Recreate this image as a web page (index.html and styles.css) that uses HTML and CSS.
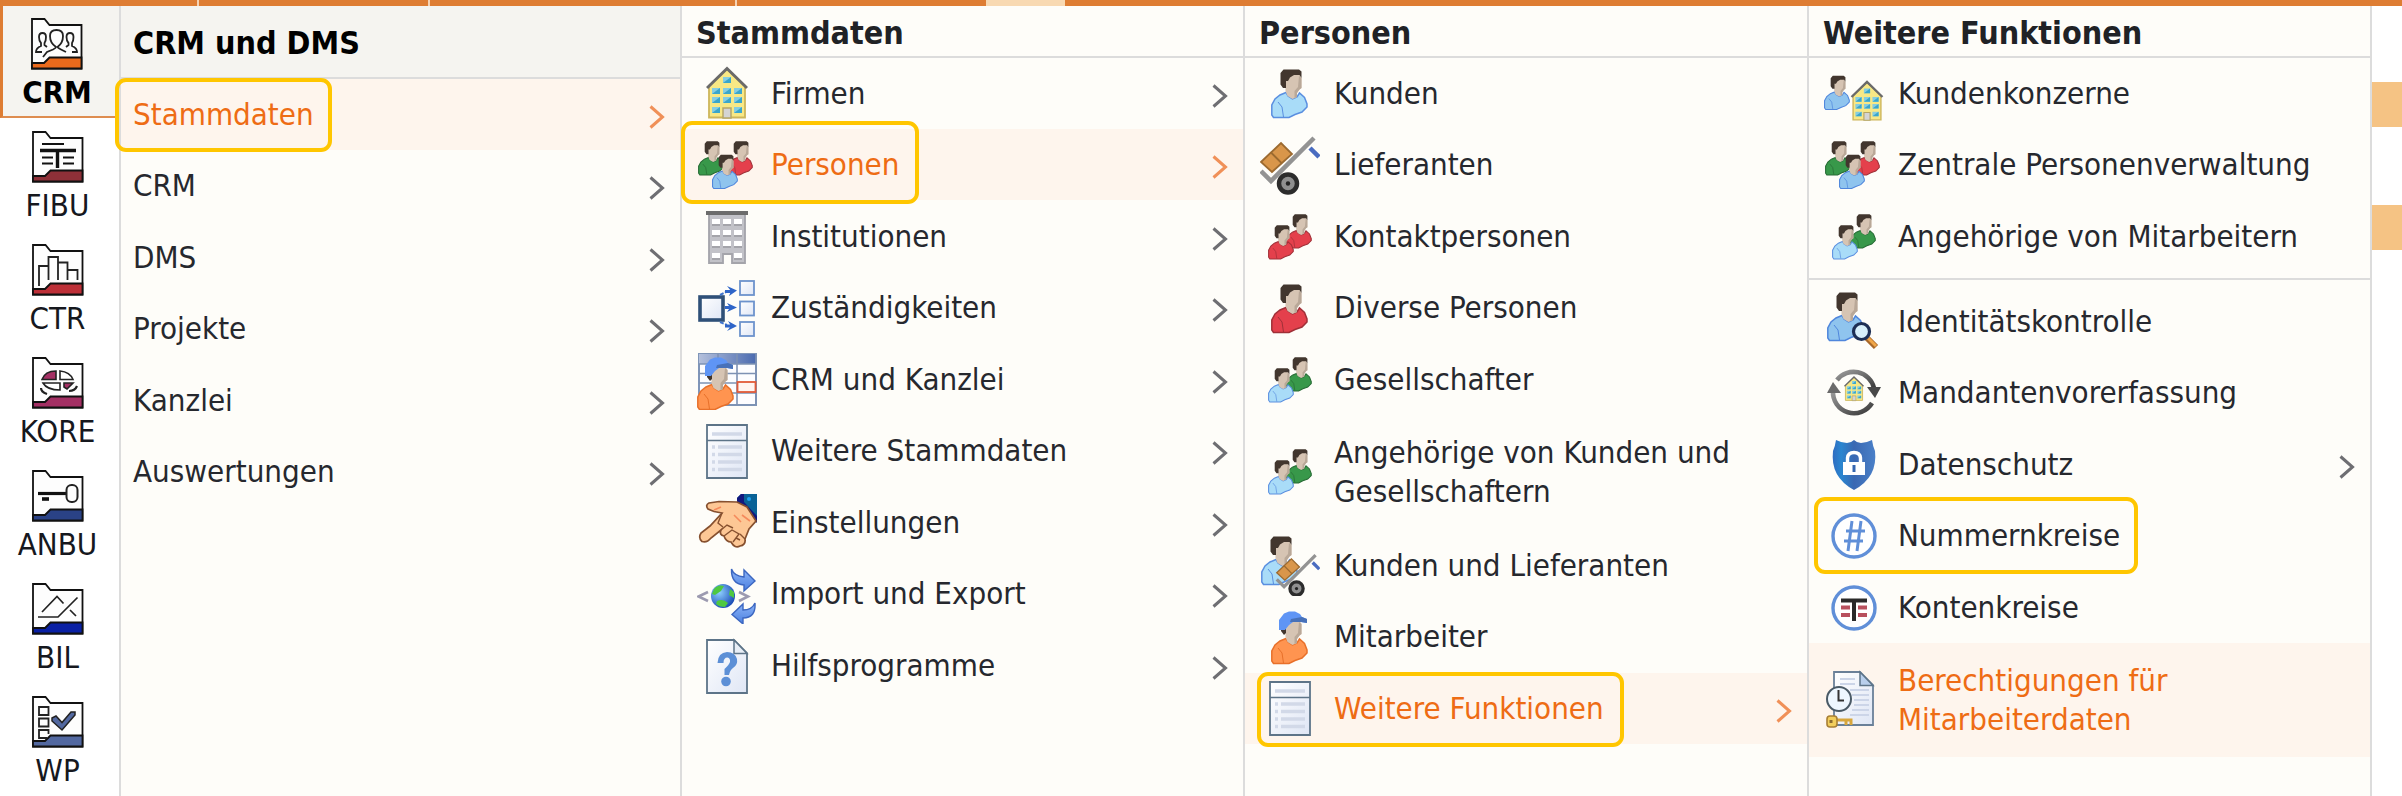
FILE: index.html
```
<!DOCTYPE html>
<html lang="de">
<head>
    <meta charset="UTF-8">
    <meta name="viewport" content="width=device-width, initial-scale=1.0">
    <title>CRM und DMS</title>
    <link rel="stylesheet" href="styles.css">
</head>
<body>
    <!-- Icon-Vorrat -->
    <svg class="sprite" aria-hidden="true">
        <defs>
            <linearGradient id="gPaper" x1="0" y1="0" x2="1" y2="1">
                <stop offset="0" stop-color="#ffffff"/>
                <stop offset="1" stop-color="#dfe6f5"/>
            </linearGradient>
            <linearGradient id="gArrow" x1="0" y1="0" x2="0" y2="1">
                <stop offset="0" stop-color="#8db5f7"/>
                <stop offset="1" stop-color="#4a7fe0"/>
            </linearGradient>
            <radialGradient id="gGlobe" cx=".35" cy=".35" r=".7">
                <stop offset="0" stop-color="#8fd0ff"/>
                <stop offset="1" stop-color="#1a4bb5"/>
            </radialGradient>
            <linearGradient id="gShield" x1="0" y1="0" x2="1" y2="0">
                <stop offset="0" stop-color="#2f6cc0"/>
                <stop offset=".2" stop-color="#2a86d0"/>
                <stop offset=".5" stop-color="#3a68b2"/>
                <stop offset="1" stop-color="#4a80c8"/>
            </linearGradient>
            <linearGradient id="gRing" x1="0" y1="0" x2="1" y2="1">
                <stop offset="0" stop-color="#9a9a9a"/>
                <stop offset="1" stop-color="#3a3a3a"/>
            </linearGradient>
            <linearGradient id="gHead" x1="0" y1="0" x2="1" y2="0">
                <stop offset="0" stop-color="#b4c0dc"/>
                <stop offset="1" stop-color="#4b6bb0"/>
            </linearGradient>
        </defs>

        <symbol id="chevron" viewBox="0 0 16 24">
            <path d="M1.5 1.5 L13.5 12 L1.5 22.5" fill="none" stroke="currentColor" stroke-width="3"/>
        </symbol>

        <!-- Ordner für die Modulleiste -->
        <symbol id="folder" viewBox="0 0 52 52">
            <path d="M1 1 H13.500 L18.500 7 H50.500 V50.500 H1 Z" fill="#fdfdfd" stroke="#111" stroke-width="1.8"/>
            <path d="M1 45 H13 L18.500 39.500 H50.500 V50.500 H1 Z" fill="currentColor" stroke="#111" stroke-width="1.8"/>
        </symbol>

        <!-- Personen -->
        <symbol id="shirt" viewBox="0 0 37 50" overflow="visible">
            <path d="M15 23.500 L17 27 L21.500 30 L26 28 L28.500 24 L33.500 28.500 L36 35 V38 L31 43 L24 45.500 L18 48.500 H2.500 L.8 46 V36 L4 30 L9 26 Z" fill="var(--shirt)" stroke="var(--edge)" stroke-width="1.5"/>
            <path d="M7 33 L11 38 L12.500 48" fill="none" stroke="var(--edge)" stroke-width="1"/>
        </symbol>
        <symbol id="face" viewBox="0 0 37 50" overflow="visible">
            <path d="M19 8 L23 5 H28.500 L30.500 9 V19 L28.500 20.500 L26 24 V28 L21.500 30 L16.500 27 L14.500 22 V12 Z" fill="#d6c4b3"/>
            <path d="M28 7 L30.500 9 V19 L28.500 20.500 L26 24 V28 L23.500 29 V22 L27 18 Z" fill="#b9a898"/>
        </symbol>
        <symbol id="person" viewBox="0 0 37 50" overflow="visible">
            <use href="#shirt" width="37" height="50"/>
            <use href="#face" width="37" height="50"/>
            <path d="M9.500 4 L12.500 .5 H28 L30.500 2.500 V9 L28.500 6 H23 L19 8.500 L17 12 H15 V19 H12 L9.500 15.500 Z" fill="#42362e"/>
        </symbol>
        <symbol id="worker" viewBox="0 0 37 54" overflow="visible">
            <use href="#shirt" y="4" width="37" height="50"/>
            <use href="#face" y="4" width="37" height="50"/>
            <path d="M10 17 H15 V22 L13 24 L10 20 Z" fill="#42362e"/>
            <path d="M8 19 V9 L13 2.500 L18 .5 H24 L29 3 L31 6 L36 8 V12 L30 11 H22 L18 14 L14 19 Z" fill="#5f95f5"/>
            <path d="M20 8 L31 6 L36 8 V12 L30 11 H19 Z" fill="#4871b8"/>
        </symbol>
        <symbol id="pair" viewBox="0 0 60 60">
            <use href="#person" class="back" x="26" y="7" width="26" height="35"/>
            <use href="#person" x="8" y="18" width="26" height="35"/>
        </symbol>
        <symbol id="trio" viewBox="0 0 60 60">
            <use href="#person" class="green" x="1" y="6" width="26" height="35"/>
            <use href="#person" class="red" x="30" y="6" width="26" height="35"/>
            <use href="#person" class="denim" x="15" y="19" width="26" height="36"/>
        </symbol>

        <!-- Gebäude -->
        <symbol id="house" viewBox="0 0 42 53">
            <path d="M3 20 L21 3 L39 20 V51.500 H3 Z" fill="#f8e885" stroke="#cdb65b" stroke-width="1.8"/>
            <path d="M1 22 L21 2.500 L41 22" fill="none" stroke="#6a6a6a" stroke-width="3"/>
            <path d="M17 11 h8 v6 h-8z M6 22 h8 v6 h-8z M17 22 h8 v6 h-8z M28 22 h8 v6 h-8z M6 31 h8 v6 h-8z M17 31 h8 v6 h-8z M28 31 h8 v6 h-8z M6 41 h8 v6 h-8z M28 41 h8 v6 h-8z" fill="#86cde0"/>
            <path d="M17 17 l8 -6 v6z M6 28 l8 -6 v6z M17 28 l8 -6 v6z M28 28 l8 -6 v6z M6 37 l8 -6 v6z M17 37 l8 -6 v6z M28 37 l8 -6 v6z M6 47 l8 -6 v6z M28 47 l8 -6 v6z" fill="#3aa6cc"/>
            <path d="M17 42 h8 v10 h-8z" fill="#d4d4d4" stroke="#b5a668" stroke-width="1.5"/>
        </symbol>
        <symbol id="office" viewBox="0 0 42 53">
            <path d="M3 3 H39 V52 H26 V43 H17 V52 H3 Z" fill="#c2c2c8" stroke="#a4a4aa" stroke-width="1.8"/>
            <path d="M0 0 H42 V4 H0 Z" fill="#6c6c6c"/>
            <path d="M6 8 h8 v5 h-8z M17 8 h8 v5 h-8z M28 8 h8 v5 h-8z M6 19 h8 v5 h-8z M17 19 h8 v5 h-8z M28 19 h8 v5 h-8z M6 30 h8 v5 h-8z M17 30 h8 v5 h-8z M28 30 h8 v5 h-8z M6 42 h8 v5 h-8z M28 42 h8 v5 h-8z" fill="#fff"/>
            <path d="M6 14 h8 M17 14 h8 M28 14 h8 M6 25 h8 M17 25 h8 M28 25 h8 M6 36 h8 M17 36 h8 M28 36 h8 M6 48 h8 M28 48 h8" stroke="#9a9aa0" stroke-width="1.5"/>
        </symbol>

        <symbol id="list" viewBox="0 0 42 55">
            <path d="M1 1 H41 V54 H1 Z" fill="url(#gPaper)" stroke="#5d7488" stroke-width="1.8"/>
            <path d="M1 16.500 H41" stroke="#5d7488" stroke-width="1.5"/>
            <path d="M6 10 H36 M12 23 H36 M12 30.500 H36 M12 38 H36 M12 45.500 H36 M6 23 h3 M6 30.500 h3 M6 38 h3 M6 45.500 h3" stroke="#d2d9e8" stroke-width="3.5"/>
        </symbol>

        <symbol id="trolley" viewBox="0 0 60 60" overflow="visible">
            <path d="M1 36 L11 46 L54 3" fill="none" stroke="#939393" stroke-width="4.500"/>
            <path d="M50 13 L59 22" stroke="#4a6cc0" stroke-width="4.500"/>
            <path d="M1 27 L21 8 L32 19 L12 37 Z" fill="#d9964a" stroke="#9c6a30" stroke-width="1.8"/>
            <path d="M11 17.500 L22 28.500" stroke="#9c6a30" stroke-width="1.8"/>
            <circle cx="28" cy="48.500" r="9" fill="#8f8f8f" stroke="#2c2c2c" stroke-width="4.500"/>
            <circle cx="28" cy="48.500" r="2.200" fill="#222"/>
        </symbol>
    </svg>

    <div class="tabstrip" aria-hidden="true">
        <span class="tab"></span>
        <span class="tab"></span>
        <span class="tab"></span>
        <span class="tab tab-plain"></span>
        <span class="tab tab-active"></span>
        <span class="tab tab-plain"></span>
    </div>

    <div class="menu">
        <nav class="rail" aria-label="Module">
            <button type="button" class="module active">
                <svg class="module-icon orange" viewBox="0 0 52 52">
                    <use href="#folder" width="52" height="52"/>
                    <g fill="none" stroke="#222" stroke-width="1.8">
                        <path d="M12 39 L16 34 L22 31.500 Q25 30 25 29 Q19 25 19 18 Q19 12 25.500 12 Q32 12 32 18 Q32 25 26.500 29 Q27 30 30 31.500 L35 34"/>
                        <path d="M11 34 H5 Q5 30 10 28 V25 Q8 23 8 19 Q8 15 11.500 15 Q15 15 15 19 Q15 23 13.500 25 V27 L16 29"/>
                        <path d="M41 34 H46 Q46 30 41 28 V25 Q42.500 23 42.500 19 Q42.500 15 39 15 Q35.500 15 35.500 19 Q35.500 23 37.500 25 V27 L35 29"/>
                    </g>
                </svg>
                <span>CRM</span>
            </button>
            <button type="button" class="module">
                <svg class="module-icon maroon" viewBox="0 0 52 52">
                    <use href="#folder" width="52" height="52"/>
                    <path d="M10 13 H32 M10 26.500 H21 M10 32.500 H21 M31 26.500 H42 M31 32.500 H42" stroke="#111" stroke-width="1.8"/>
                    <path d="M8 19.500 H44 M25.500 19 V37" stroke="#111" stroke-width="3.400"/>
                </svg>
                <span>FIBU</span>
            </button>
            <button type="button" class="module">
                <svg class="module-icon crimson" viewBox="0 0 52 52">
                    <use href="#folder" width="52" height="52"/>
                    <path d="M7 42 V22 H16 M16.500 36 V13 H26 V36 M26 18.500 H35.500 V36 M35.500 26 H45.500 V36" fill="none" stroke="#222" stroke-width="1.800"/>
                </svg>
                <span>CTR</span>
            </button>
            <button type="button" class="module">
                <svg class="module-icon plum" viewBox="0 0 52 52">
                    <use href="#folder" width="52" height="52"/>
                    <path d="M10 22.500 Q13 14 24 14 V22.500 Z M32 26 H41 L35 32 L32 30 Z" fill="currentColor" stroke="#222" stroke-width="1.600"/>
                    <path d="M28 14 Q38 15 41 22.500 H28 Z M11 26 H28 V33 Q15 33 11 26 Z" fill="#fff" stroke="#222" stroke-width="1.600"/>
                    <path d="M9 31 Q9 35 15 37 M45 29 Q43 34 37 34" fill="none" stroke="#222" stroke-width="2.200"/>
                </svg>
                <span>KORE</span>
            </button>
            <button type="button" class="module">
                <svg class="module-icon navy" viewBox="0 0 52 52">
                    <use href="#folder" width="52" height="52"/>
                    <path d="M6 23.500 H35" stroke="#111" stroke-width="3.200"/>
                    <path d="M10 29 H17" stroke="#111" stroke-width="3.600"/>
                    <rect x="34.500" y="15" width="11" height="17" rx="5" fill="none" stroke="#222" stroke-width="2"/>
                </svg>
                <span>ANBU</span>
            </button>
            <button type="button" class="module">
                <svg class="module-icon blue" viewBox="0 0 52 52">
                    <use href="#folder" width="52" height="52"/>
                    <path d="M10 29 L25 13.500 L31.500 20.500 M38 27 L44 33 M6 34 H26 L45.500 14.500" fill="none" stroke="#222" stroke-width="1.700"/>
                </svg>
                <span>BIL</span>
            </button>
            <button type="button" class="module">
                <svg class="module-icon steel" viewBox="0 0 52 52">
                    <use href="#folder" width="52" height="52"/>
                    <path d="M7 11 H16.500 V19 H7 Z M7 22.500 H16.500 V30.500 H7 Z M15 42 H7 V34 H16.500 V38" fill="none" stroke="#222" stroke-width="1.800"/>
                    <path d="M20 22 L24 20 L30 26.500 L39 16 H43 V19 L30 34 L20 25 Z" fill="currentColor" stroke="#222" stroke-width="1.500"/>
                </svg>
                <span>WP</span>
            </button>
        </nav>

        <section class="panel panel-first">
            <h1 class="panel-title">CRM und DMS</h1>
            <ul class="items">
                <li><button type="button" class="item selected"><span class="entry mark">Stammdaten</span><svg class="chevron"><use href="#chevron"/></svg></button></li>
                <li><button type="button" class="item"><span class="entry">CRM</span><svg class="chevron"><use href="#chevron"/></svg></button></li>
                <li><button type="button" class="item"><span class="entry">DMS</span><svg class="chevron"><use href="#chevron"/></svg></button></li>
                <li><button type="button" class="item"><span class="entry">Projekte</span><svg class="chevron"><use href="#chevron"/></svg></button></li>
                <li><button type="button" class="item"><span class="entry">Kanzlei</span><svg class="chevron"><use href="#chevron"/></svg></button></li>
                <li><button type="button" class="item"><span class="entry">Auswertungen</span><svg class="chevron"><use href="#chevron"/></svg></button></li>
            </ul>
        </section>

        <section class="panel">
            <h2 class="panel-title">Stammdaten</h2>
            <ul class="items">
                <li><button type="button" class="item">
                    <span class="entry">
                        <svg class="icon" viewBox="0 0 60 60"><use href="#house" x="9" y="2" width="42" height="53"/></svg>
                        <span>Firmen</span>
                    </span>
                    <svg class="chevron"><use href="#chevron"/></svg>
                </button></li>
                <li><button type="button" class="item selected">
                    <span class="entry mark mark-tall">
                        <svg class="icon" viewBox="0 0 60 60"><use href="#trio" width="60" height="60"/></svg>
                        <span>Personen</span>
                    </span>
                    <svg class="chevron"><use href="#chevron"/></svg>
                </button></li>
                <li><button type="button" class="item">
                    <span class="entry">
                        <svg class="icon" viewBox="0 0 60 60"><use href="#office" x="9" y="4" width="42" height="53"/></svg>
                        <span>Institutionen</span>
                    </span>
                    <svg class="chevron"><use href="#chevron"/></svg>
                </button></li>
                <li><button type="button" class="item">
                    <span class="entry">
                        <svg class="icon" viewBox="0 0 60 60">
                            <rect x="3" y="19" width="23" height="23" fill="url(#gPaper)" stroke="#2f5078" stroke-width="3.600"/>
                            <g fill="url(#gPaper)" stroke="#6d93cc" stroke-width="1.800">
                                <rect x="43" y="3" width="14" height="14"/>
                                <rect x="43" y="23.500" width="14" height="14"/>
                                <rect x="43" y="44" width="14" height="14"/>
                            </g>
                            <path d="M23 17 L30 13.500 M28 29.500 H34 M23 44 L30 47" stroke="#3f73cc" stroke-width="2" stroke-dasharray="4 1.500"/>
                            <path d="M30 8 L40 12.500 L32 18 L34 13 Z M30 25 L40 29.500 L30 34 L33 29.500 Z M31 43 L40 48 L30 53 L34 48 Z M28 12 h7 v3 h-7z M28 28 h7 v3 h-7z M28 46.500 h7 v3 h-7z" fill="#2f65c8"/>
                        </svg>
                        <span>Zuständigkeiten</span>
                    </span>
                    <svg class="chevron"><use href="#chevron"/></svg>
                </button></li>
                <li><button type="button" class="item">
                    <span class="entry">
                        <svg class="icon" viewBox="0 0 60 60">
                            <rect x="2" y="4" width="57" height="51" fill="#fdfdff" stroke="#7f95b8" stroke-width="2"/>
                            <rect x="2" y="4" width="57" height="10" fill="url(#gHead)"/>
                            <path d="M21 4 V55 M40 4 V55 M2 14 H59 M2 23.500 H59 M2 33 H59 M2 43 H59 M59 4 V55 H30" fill="none" stroke="#7e92b4" stroke-width="1.600"/>
                            <rect x="40.500" y="32" width="18" height="10" fill="#fff4f0" stroke="#e25a38" stroke-width="1.800"/>
                            <use href="#worker" class="amber" x="0" y="7" width="37" height="54"/>
                        </svg>
                        <span>CRM und Kanzlei</span>
                    </span>
                    <svg class="chevron"><use href="#chevron"/></svg>
                </button></li>
                <li><button type="button" class="item">
                    <span class="entry">
                        <svg class="icon" viewBox="0 0 60 60"><use href="#list" x="9" y="3" width="42" height="55"/></svg>
                        <span>Weitere Stammdaten</span>
                    </span>
                    <svg class="chevron"><use href="#chevron"/></svg>
                </button></li>
                <li><button type="button" class="item">
                    <span class="entry">
                        <svg class="icon" viewBox="0 0 60 60">
                            <path d="M40 10 V5 L44 1 H60 V30 L50 14 Z" fill="#0a6296"/>
                            <path d="M40 10 V5 L44 1 H47 V9 L60 23 V30 L50 15 Z" fill="#12187e"/>
                            <circle cx="52" cy="6" r="2" fill="#1ea0f0"/>
                            <path d="M40 9 L22 8.500 L12 10 Q8 12 11 16 L17 18.500 L25 20 L13 33 L4 40 Q1 45 5 48.500 Q10 50 14 45 L24 37 Q22 42 27 43 Q29 49 34 49 Q38 56 43 53 Q49 52 48 46 L52 36 L59 28 L50 14 Z" fill="#fdc795" stroke="#86502f" stroke-width="1.700"/>
                            <path d="M25 20 L21 30 L26 34 M24 37 L30 32 L36 35 M27 43 L35 37 L42 41 L36 49 M43 41 L48 46 M39 45 L43 47" fill="none" stroke="#86502f" stroke-width="1.400"/>
                            <path d="M37 22 L44 29 M45 22 L53 28 M17 17 L24 14" stroke="#f58a5c" stroke-width="1.600"/>
                        </svg>
                        <span>Einstellungen</span>
                    </span>
                    <svg class="chevron"><use href="#chevron"/></svg>
                </button></li>
                <li><button type="button" class="item">
                    <span class="entry">
                        <svg class="icon" viewBox="0 0 60 60">
                            <path d="M11 28 L1.500 32.500 L11 37 M42 28 L51 32.500 L42 37" fill="none" stroke="#9c9ab0" stroke-width="2.600"/>
                            <circle cx="26" cy="32" r="12" fill="url(#gGlobe)"/>
                            <path d="M17 25 Q21 20 27 22 L24 27 L18 31 L15 30 Z M20 37 Q26 34 31 39 L28 43 Q22 43 19 40 Z M33 25 L37 28 V34 L32 31 Z" fill="#4fc840"/>
                            <path d="M34.500 5 Q37 12 47 13 V6 L58 17 L47 27 V21 Q34 20 34.500 5 Z" fill="url(#gArrow)" stroke="#3b66c0" stroke-width="1.400"/>
                            <path d="M58 39 Q55 46 46 46 V40 L35 50.500 L46 60 V54 Q59 54 58 39 Z" fill="url(#gArrow)" stroke="#3b66c0" stroke-width="1.400"/>
                        </svg>
                        <span>Import und Export</span>
                    </span>
                    <svg class="chevron"><use href="#chevron"/></svg>
                </button></li>
                <li><button type="button" class="item">
                    <span class="entry">
                        <svg class="icon" viewBox="0 0 60 60">
                            <path d="M10 4 H37 L50 17 V57 H10 Z" fill="url(#gPaper)" stroke="#5d7488" stroke-width="1.800"/>
                            <path d="M37 4 V17.500 H50 Z" fill="#e8eef6" stroke="#5d7488" stroke-width="1.500"/>
                            <path d="M20.500 27 H26.500 Q26.500 21.500 30.500 21.500 Q33.500 22 33 26 Q32 29 27.500 33 V39 H32 Q33 34 36 32 Q41 29 40 23 Q38 16 30 16 Q21 16.500 20.500 27 Z" fill="#5c8fd6"/>
                            <circle cx="29" cy="45.500" r="4.800" fill="#5c8fd6"/>
                        </svg>
                        <span>Hilfsprogramme</span>
                    </span>
                    <svg class="chevron"><use href="#chevron"/></svg>
                </button></li>
            </ul>
        </section>

        <section class="panel">
            <h2 class="panel-title">Personen</h2>
            <ul class="items">
                <li><button type="button" class="item"><span class="entry">
                    <svg class="icon sky" viewBox="0 0 60 60"><use href="#person" x="11" y="5" width="37" height="50"/></svg>
                    <span>Kunden</span>
                </span></button></li>
                <li><button type="button" class="item"><span class="entry">
                    <svg class="icon" viewBox="0 0 60 60"><use href="#trolley" width="60" height="60"/></svg>
                    <span>Lieferanten</span>
                </span></button></li>
                <li><button type="button" class="item"><span class="entry">
                    <svg class="icon pair-red" viewBox="0 0 60 60"><use href="#pair" width="60" height="60"/></svg>
                    <span>Kontaktpersonen</span>
                </span></button></li>
                <li><button type="button" class="item"><span class="entry">
                    <svg class="icon red" viewBox="0 0 60 60"><use href="#person" x="11" y="6" width="37" height="50"/></svg>
                    <span>Diverse Personen</span>
                </span></button></li>
                <li><button type="button" class="item"><span class="entry">
                    <svg class="icon pair-green" viewBox="0 0 60 60"><use href="#pair" width="60" height="60"/></svg>
                    <span>Gesellschafter</span>
                </span></button></li>
                <li><button type="button" class="item item-tall"><span class="entry">
                    <svg class="icon pair-green" viewBox="0 0 60 60"><use href="#pair" width="60" height="60"/></svg>
                    <span>Angehörige von Kunden und<br>Gesellschaftern</span>
                </span></button></li>
                <li><button type="button" class="item"><span class="entry">
                    <svg class="icon sky" viewBox="0 0 60 60">
                        <use href="#person" x="1" y="0" width="37" height="50"/>
                        <use href="#trolley" x="16" y="17" width="44" height="44"/>
                    </svg>
                    <span>Kunden und Lieferanten</span>
                </span></button></li>
                <li><button type="button" class="item"><span class="entry">
                    <svg class="icon amber" viewBox="0 0 60 60"><use href="#worker" x="11" y="4" width="37" height="54"/></svg>
                    <span>Mitarbeiter</span>
                </span></button></li>
                <li><button type="button" class="item selected">
                    <span class="entry mark mark-tight">
                        <svg class="icon" viewBox="0 0 60 60"><use href="#list" x="9" y="2" width="42" height="55"/></svg>
                        <span>Weitere Funktionen</span>
                    </span>
                    <svg class="chevron"><use href="#chevron"/></svg>
                </button></li>
            </ul>
        </section>

        <section class="panel">
            <h2 class="panel-title">Weitere Funktionen</h2>
            <ul class="items">
                <li><button type="button" class="item"><span class="entry">
                    <svg class="icon denim" viewBox="0 0 60 60">
                        <use href="#person" x="0" y="11" width="26" height="36"/>
                        <use href="#house" x="26" y="16" width="34" height="41"/>
                    </svg>
                    <span>Kundenkonzerne</span>
                </span></button></li>
                <li><button type="button" class="item"><span class="entry">
                    <svg class="icon" viewBox="0 0 60 60"><use href="#trio" width="60" height="60"/></svg>
                    <span>Zentrale Personenverwaltung</span>
                </span></button></li>
                <li><button type="button" class="item"><span class="entry">
                    <svg class="icon pair-green" viewBox="0 0 60 60"><use href="#pair" width="60" height="60"/></svg>
                    <span>Angehörige von Mitarbeitern</span>
                </span></button></li>
            </ul>
            <hr class="divider">
            <ul class="items">
                <li><button type="button" class="item"><span class="entry">
                    <svg class="icon denim" viewBox="0 0 60 60">
                        <use href="#person" x="3" y="0" width="37" height="50"/>
                        <path d="M43 46 L52 55" stroke="#a8682a" stroke-width="6"/>
                        <path d="M43 45 L52 54" stroke="#f0a648" stroke-width="3"/>
                        <circle cx="37.500" cy="39.500" r="8" fill="#d8f0fb" stroke="#1d2f55" stroke-width="3.200"/>
                    </svg>
                    <span>Identitätskontrolle</span>
                </span></button></li>
                <li><button type="button" class="item"><span class="entry">
                    <svg class="icon" viewBox="0 0 60 60">
                        <use href="#house" x="20" y="12" width="20" height="27"/>
                        <path d="M13 17 A21 21 0 0 1 50 25" fill="none" stroke="url(#gRing)" stroke-width="4.600"/>
                        <path d="M48 40 A21 21 0 0 1 9 28" fill="none" stroke="url(#gRing)" stroke-width="4.600"/>
                        <path d="M43 24 H57 L51 35 Z" fill="#484848"/>
                        <path d="M3 30 H17 L9 19 Z" fill="#6a6a6a"/>
                    </svg>
                    <span>Mandantenvorerfassung</span>
                </span></button></li>
                <li><button type="button" class="item">
                    <span class="entry">
                        <svg class="icon" viewBox="0 0 60 60">
                            <path d="M12 5 Q18 8 23 8 Q27 8 30 5 Q33 8 37 8 Q42 8 48 5 Q49 12 51 16 Q54 42 30 55 Q6 42 9 16 Q11 12 12 5 Z" fill="url(#gShield)"/>
                            <rect x="19" y="27" width="22" height="13" fill="#fff"/>
                            <path d="M23.500 27 V23 Q24 17.500 30 17.500 Q36 17.500 36.500 23 V27" fill="none" stroke="#fff" stroke-width="3.400"/>
                            <path d="M30 30 V37" stroke="#3566b0" stroke-width="3"/>
                        </svg>
                        <span>Datenschutz</span>
                    </span>
                    <svg class="chevron"><use href="#chevron"/></svg>
                </button></li>
                <li><button type="button" class="item"><span class="entry mark mark-mid">
                    <svg class="icon" viewBox="0 0 60 60">
                        <circle cx="30" cy="30" r="21" fill="#fff" stroke="#608fd8" stroke-width="3.400"/>
                        <path d="M28 15 L24 45 M37 15 L33 45 M22 25 H41 M20 35 H39" stroke="#608fd8" stroke-width="3"/>
                    </svg>
                    <span>Nummernkreise</span>
                </span></button></li>
                <li><button type="button" class="item"><span class="entry">
                    <svg class="icon" viewBox="0 0 60 60">
                        <circle cx="30" cy="30" r="21" fill="#fff" stroke="#608fd8" stroke-width="3.400"/>
                        <path d="M17 29.500 H26 M17 37 H26 M34 29.500 H43 M34 37 H43" stroke="#b8505e" stroke-width="4"/>
                        <path d="M17 22.500 H43 M30 22.500 V43" stroke="#2a2a2a" stroke-width="4"/>
                    </svg>
                    <span>Kontenkreise</span>
                </span></button></li>
                <li><button type="button" class="item item-tall selected"><span class="entry">
                    <svg class="icon" viewBox="0 0 60 60">
                        <path d="M10 2 H36 L49 15 V55 H10 Z" fill="url(#gPaper)" stroke="#6a8098" stroke-width="1.800"/>
                        <path d="M36 2 V15.500 H49 Z" fill="#b9cfec" stroke="#5d7488" stroke-width="1.500"/>
                        <path d="M16 9 H31 M16 14 H31 M26 20 H45 M28 25 H45 M30 30 H45 M30 35 H45 M28 40 H45 M26 45 H45" stroke="#ccd5e8" stroke-width="1.800"/>
                        <circle cx="15" cy="29" r="12" fill="#eef7ff" stroke="#4a5a66" stroke-width="2"/>
                        <path d="M14.500 20 V30.500 H20" fill="none" stroke="#333" stroke-width="2"/>
                        <path d="M13 50 H27 V55 M22 51 V55" fill="none" stroke="#d8a63c" stroke-width="3"/>
                        <rect x="3" y="46" width="10" height="11" rx="3" fill="#f2ce5c" stroke="#a87f35" stroke-width="1.600"/>
                        <rect x="5.500" y="50" width="3" height="3" fill="#8a6a30"/>
                    </svg>
                    <span>Berechtigungen für<br>Mitarbeiterdaten</span>
                </span></button></li>
            </ul>
        </section>

        <div class="backdrop" aria-hidden="true">
            <div class="stripe"></div>
            <div class="stripe"></div>
        </div>
    </div>
</body>
</html>
```

FILE: styles.css
```
* {
    box-sizing: border-box;
}

body {
    margin: 0;
    min-height: 100vh;
    display: flex;
    flex-direction: column;
    background: #fff;
    color: #26282e;
    font-family: 'DejaVu Sans Condensed', 'DejaVu Sans', sans-serif;
    font-size: 31px;
    line-height: 39px;
}

button {
    border: none;
    background: none;
    padding: 0;
    color: inherit;
    font: inherit;
    text-align: left;
    cursor: pointer;
}

.sprite {
    position: absolute;
    width: 0;
    height: 0;
}

/* Registerleiste oben */
.tabstrip {
    display: grid;
    grid-template-columns: 199fr 231fr 307fr 249fr 79fr 1337fr;
    height: 6px;
}

.tab {
    background: #de7d33;
    border-right: 2px solid #f6d3b4;
}

.tab-plain {
    border-right: none;
}

.tab-active {
    background: #f8d9b2;
    border-right: none;
}

.menu {
    flex: 1;
    display: grid;
    grid-template-columns: 119px 561fr 563fr 564fr 563fr 32px;
}

/* Modulleiste links */
.rail {
    display: flex;
    flex-direction: column;
}

.module {
    display: flex;
    flex-direction: column;
    align-items: center;
    gap: 3px;
    height: 113px;
    padding-top: 12px;
    padding-right: 4px;
    color: #16181e;
}

.module.active {
    height: 112px;
    margin-bottom: 1px;
    padding-right: 8px;
    background: #f5f4f0;
    border-left: 3px solid #de7d33;
    border-bottom: 2px solid #de8d50;
    color: #000;
    font-weight: bold;
}

.module-icon {
    width: 52px;
    height: 52px;
    flex-shrink: 0;
}

.orange { color: #ea6a1c; }
.maroon { color: #8e3038; }
.crimson { color: #bd3038; }
.plum { color: #a43064; }
.navy { color: #2a4286; }
.blue { color: #0a20a4; }
.steel { color: #5268a0; }

/* Menüspalten */
.panel {
    background: #fefdf9;
    border-left: 2px solid #dcdcdc;
}

.panel-title {
    margin: 0;
    height: 52px;
    padding: 8px 14px 0;
    border-bottom: 2px solid #dcdcdc;
    font-size: 32px;
    line-height: 39px;
    color: #202226;
}

.panel-first .panel-title {
    height: 73px;
    padding: 18px 12px 0;
    background: #f5f4f0;
    color: #000;
}

.items {
    margin: 0;
    padding: 0;
    list-style: none;
}

.items li:nth-child(even) {
    margin-bottom: 1px;
}

.item {
    display: flex;
    align-items: stretch;
    justify-content: space-between;
    width: 100%;
    height: 71px;
    padding: 0 15px;
}

.panel-first .item {
    padding-left: 12px;
}

.item-tall {
    height: 114px;
}

.item:hover,
.item.selected {
    background: #fef5ed;
    color: #ee6c14;
}

.entry {
    position: relative;
    display: flex;
    align-items: center;
    gap: 14px;
    white-space: nowrap;
}

.icon {
    width: 60px;
    height: 60px;
    flex-shrink: 0;
}

.chevron {
    align-self: center;
    width: 16px;
    height: 24px;
    margin-top: 4px;
    color: #6e6e72;
}

.selected .chevron {
    color: #f09058;
}

.divider {
    margin: 6px 0;
    height: 2px;
    border: none;
    background: #dcdcdc;
}

/* gelber Rahmen um hervorgehobene Einträge */
.mark::after {
    content: '';
    position: absolute;
    z-index: 1;
    inset: -1px -18px -2px -18px;
    border: 4px solid #ffc600;
    border-radius: 11px;
}

.mark-tall::after {
    inset: -8px -20px -4px -16px;
}

.mark-tight::after {
    inset: -1px -20px -3px -3px;
}

.mark-mid::after {
    inset: -3px -18px -3px -10px;
}

/* Hemdfarben der Personen */
.sky { --shirt: #a9dcf8; --edge: #5a8fe0; }
.denim { --shirt: #8fc4ee; --edge: #4f86dc; }
.green { --shirt: #38984a; --edge: #266b34; }
.red { --shirt: #e4404c; --edge: #a03038; }
.amber { --shirt: #ff9450; --edge: #e8702a; }

.pair-red {
    --shirt: #e4404c;
    --edge: #a03038;
    --back-shirt: #e4404c;
    --back-edge: #a03038;
}

.pair-green {
    --shirt: #a9dcf8;
    --edge: #5a8fe0;
    --back-shirt: #38984a;
    --back-edge: #266b34;
}

.back {
    --shirt: var(--back-shirt);
    --edge: var(--back-edge);
}

/* Fenster hinter dem Menü */
.backdrop {
    display: flex;
    flex-direction: column;
    gap: 78px;
    padding-top: 76px;
    border-left: 2px solid #dcdcdc;
}

.stripe {
    height: 45px;
    background: #f5c384;
}
```
